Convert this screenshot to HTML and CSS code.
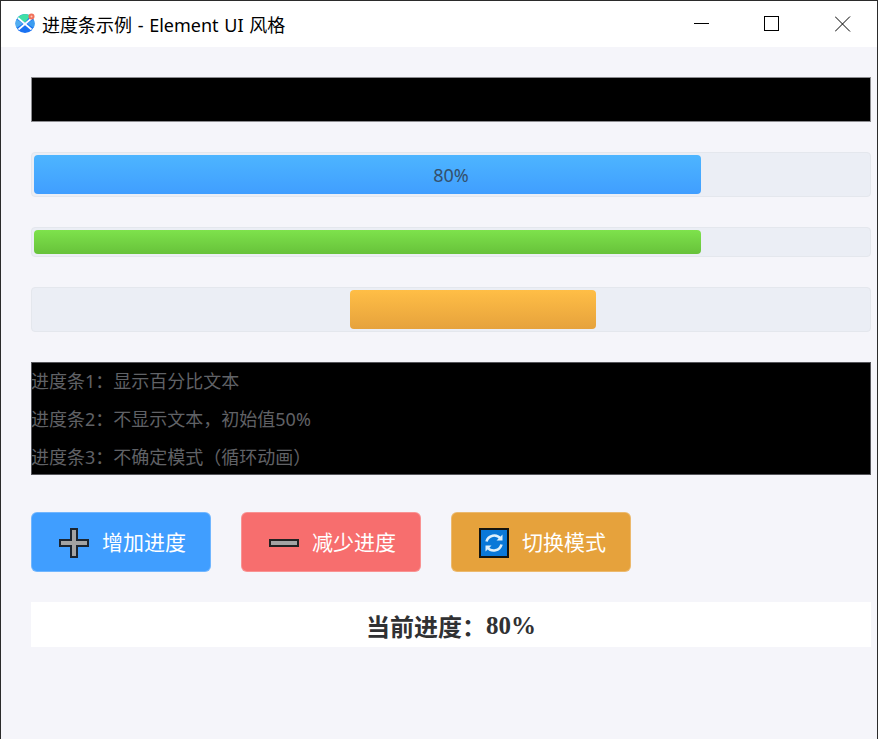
FILE: index.html
```html
<!DOCTYPE html>
<html lang="zh-CN">
<head>
  <meta charset="UTF-8" />
  <title>进度条示例 - Element UI 风格</title>
  <link rel="stylesheet" href="styles.css">
</head>
<body>

  <div class="window">
    <div class="titlebar">
      <svg class="app-icon" width="20" height="20" viewBox="0 0 20 20">
        <circle cx="10" cy="10.5" r="9.5" fill="#1a72f2"/>
        <path d="M2 5.5 A9.5 9.5 0 0 1 15.5 2.8 L10 9.5 Z" fill="#3fe0a6"/>
        <path d="M1.5 6.2 L8 10.5 L1.5 15 A9.5 9.5 0 0 1 1.5 6.2 Z" fill="#52aef0"/>
        <path d="M18.6 6.2 L12 10.5 L18.6 15 A9.5 9.5 0 0 0 18.6 6.2 Z" fill="#3b9cf0"/>
        <path d="M3 5 L16.5 16.5 M17 5 L3.5 16.5" stroke="#fff" stroke-width="1.7"/>
        <circle cx="16.5" cy="3.5" r="3" fill="#f0705a"/>
        <circle cx="16.5" cy="3.5" r="1" fill="#ffc9b8"/>
      </svg>
      <span class="title">进度条示例 - Element UI 风格</span>
      <div class="controls">
        <button class="ctl"><svg width="16" height="16" viewBox="0 0 16 16"><path d="M1 7.5H16" stroke="#000" fill="none"/></svg></button>
        <button class="ctl"><svg width="16" height="16" viewBox="0 0 16 16"><rect x="0.5" y="0.5" width="14" height="14" stroke="#000" fill="none"/></svg></button>
        <button class="ctl"><svg width="16" height="16" viewBox="0 0 16 16"><path d="M0 0.5L15 15.5M15 0.5L0 15.5" stroke="#000" fill="none"/></svg></button>
      </div>
    </div>

    <div class="content">
      <div class="black-bar"></div>

      <div class="track track-tall">
        <div class="fill fill-blue" style="width: 80%"></div>
        <span class="percent">80%</span>
      </div>

      <div class="track track-thin">
        <div class="fill fill-green" style="width: 80%"></div>
      </div>

      <div class="track track-tall">
        <div class="fill fill-orange chunk"></div>
      </div>

      <div class="notes">
        <p>进度条1：显示百分比文本</p>
        <p>进度条2：不显示文本，初始值50%</p>
        <p>进度条3：不确定模式（循环动画）</p>
      </div>

      <div class="buttons">
        <button class="btn btn-blue">
          <svg width="30" height="30" viewBox="0 0 30 30">
            <path d="M12 1H18V12H29V18H18V29H12V18H1V12H12Z" fill="#a3a3a3" stroke="#1c2530" stroke-width="2"/>
          </svg>
          增加进度
        </button>
        <button class="btn btn-red">
          <svg width="30" height="30" viewBox="0 0 30 30">
            <rect x="1" y="12" width="28" height="6" fill="#a3a3a3" stroke="#222" stroke-width="2"/>
          </svg>
          减少进度
        </button>
        <button class="btn btn-orange">
          <svg width="30" height="30" viewBox="0 0 30 30">
            <rect x="1" y="1" width="28" height="28" fill="#0a78d8" stroke="#14140f" stroke-width="2"/>
            <path d="M7.5 13.5A8 8 0 0 1 21.5 10.5M22.5 16.5A8 8 0 0 1 8.5 19.5" fill="none" stroke="#dff0fb" stroke-width="2.6"/>
            <path d="M23.5 6.5V12.5H17.5ZM6.5 23.5V17.5H12.5Z" fill="#dff0fb"/>
          </svg>
          切换模式
        </button>
      </div>

      <div class="status">当前进度：<span class="status-num">80%</span></div>
    </div>
  </div>

</body>
</html>
```

FILE: styles.css
```css
* {
  box-sizing: border-box;
}
html, body {
  margin: 0;
  height: 100%;
}
body {
  font-family: "Noto Sans", "Noto Sans CJK SC", sans-serif;
}
.window {
  height: 739px;
  border: 1px solid #2b2b2b;
  border-bottom: none;
  background: #f5f5fa;
  display: flex;
  flex-direction: column;
}
.titlebar {
  height: 46px;
  background: #fff;
  display: flex;
  align-items: center;
  padding-left: 14px;
  flex-shrink: 0;
}
.app-icon {
  margin-right: 7px;
  margin-top: -3px;
}
.title {
  font-size: 18px;
  color: #000;
  margin-top: -1px;
  word-spacing: 1px;
}
.controls {
  margin-left: auto;
  display: flex;
}
.ctl {
  width: 71px;
  height: 46px;
  padding: 0 0 0 2px;
  border: none;
  background: none;
  display: flex;
  align-items: center;
  justify-content: center;
}
.content {
  width: 870px;
  padding: 30px 0 0 30px;
  display: flex;
  flex-direction: column;
  gap: 30px;
}
.black-bar {
  height: 45px;
  background: #000;
  border: 1px solid #8c8c90;
}
.track {
  position: relative;
  background: #ebeef5;
  border: 1px solid #e4e7ed;
  border-radius: 4px;
  padding: 2px;
  display: flex;
}
.track-tall {
  height: 45px;
}
.track-thin {
  height: 30px;
}
.fill {
  height: 100%;
  border-radius: 4px;
}
.fill-blue {
  background: linear-gradient(#4db5ff, #409eff);
}
.fill-green {
  background: linear-gradient(#7ee24c, #67c23a);
}
.fill-orange {
  background: linear-gradient(#ffbe46, #e6a23c);
}
.chunk {
  width: 246px;
  margin-left: 316px;
}
.percent {
  position: absolute;
  inset: 0;
  display: flex;
  align-items: center;
  justify-content: center;
  font-size: 18px;
  color: #34506c;
}
.notes {
  height: 113px;
  background: #000;
  border: 1px solid #55555a;
  color: #606266;
  font-size: 18px;
  line-height: 38px;
}
.notes p {
  margin: 0 0 0 -1px;
}
.notes p:first-child {
  margin-top: -1px;
}
.buttons {
  display: flex;
  gap: 30px;
  margin-top: 7px;
}
.btn {
  width: 180px;
  height: 60px;
  border: 1px solid rgba(255, 255, 255, 0.25);
  border-radius: 6px;
  color: #fff;
  font-family: inherit;
  font-size: 21px;
  display: flex;
  align-items: center;
  justify-content: center;
  gap: 13px;
  padding: 0 0 2px 3px;
}
.btn svg {
  margin-top: 4px;
}
.btn-blue {
  background: #409eff;
}
.btn-red {
  background: #f76e6e;
}
.btn-orange {
  background: #e6a23c;
}
.status {
  height: 45px;
  background: #fff;
  color: #303133;
  font-size: 24px;
  font-weight: bold;
  display: flex;
  align-items: center;
  justify-content: center;
  padding-top: 2px;
}
.status-num {
  font-family: "Liberation Serif", serif;
  font-size: 25px;
}
```
